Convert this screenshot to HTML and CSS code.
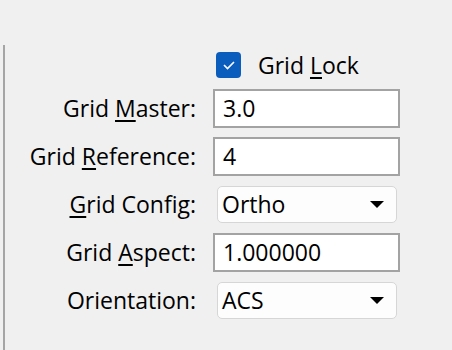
FILE: index.html
```html
<!DOCTYPE html>
<html lang="en">
<head>
    <meta charset="UTF-8">
    <title>Grid Settings</title>
    <link rel="stylesheet" href="styles.css">
</head>
<body>
    <div class="panel">
        <div class="form">
            <div class="label"></div>
            <label class="check">
                <span class="box">
                    <svg width="14" height="10" viewBox="0 0 14 10"><path d="M2 5 L5.5 8.5 L12 2" fill="none" stroke="#fff" stroke-width="1.6"/></svg>
                </span>
                <span>Grid <u>L</u>ock</span>
            </label>

            <div class="label">Grid <u>M</u>aster:</div>
            <div class="field">3.0</div>

            <div class="label">Grid <u>R</u>eference:</div>
            <div class="field">4</div>

            <div class="label"><u>G</u>rid Config:</div>
            <div class="select">Ortho <span class="arrow"></span></div>

            <div class="label">Grid <u>A</u>spect:</div>
            <div class="field">1.000000</div>

            <div class="label">Orientation:</div>
            <div class="select">ACS <span class="arrow"></span></div>
        </div>
    </div>
</body>
</html>
```

FILE: styles.css
```css
* {
    margin: 0;
    padding: 0;
    box-sizing: border-box;
}

body {
    font-family: "Open Sans", "Noto Sans", sans-serif;
    font-size: 23px;
    background-color: #f0f0f0;
    color: #000;
    height: 350px;
    overflow: hidden;
}

/* Panel with left divider */
.panel {
    margin: 45px 0 0 3px;
    border-left: 2px solid #a5a5a5;
    height: 305px;
}

.form {
    display: grid;
    grid-template-columns: 191px 187px;
    grid-template-rows: 39px repeat(5, 48px);
    column-gap: 17px;
    align-items: center;
}

.label {
    text-align: right;
}

u {
    text-decoration-thickness: 2px;
    text-underline-offset: 3px;
}

/* Checkbox */
.check {
    display: flex;
    align-items: center;
    gap: 17px;
    padding-left: 3px;
}

.box {
    width: 25px;
    height: 26px;
    background-color: #0a5dbd;
    border-radius: 4px;
    display: flex;
    align-items: center;
    justify-content: center;
}

/* Text inputs */
.field {
    height: 39px;
    background-color: #fff;
    border: 2px solid #a3a3a3;
    padding: 0 8px;
    display: flex;
    align-items: center;
}

/* Dropdowns */
.select {
    height: 37px;
    margin: 0 3px 0 4px;
    background-color: #fdfdfd;
    border: 1px solid #d6d6d6;
    border-radius: 5px;
    padding: 0 4px;
    display: flex;
    align-items: center;
    justify-content: space-between;
}

.arrow {
    width: 0;
    height: 0;
    border-left: 7px solid transparent;
    border-right: 7px solid transparent;
    border-top: 7px solid #000;
    margin-right: 8px;
}
```
